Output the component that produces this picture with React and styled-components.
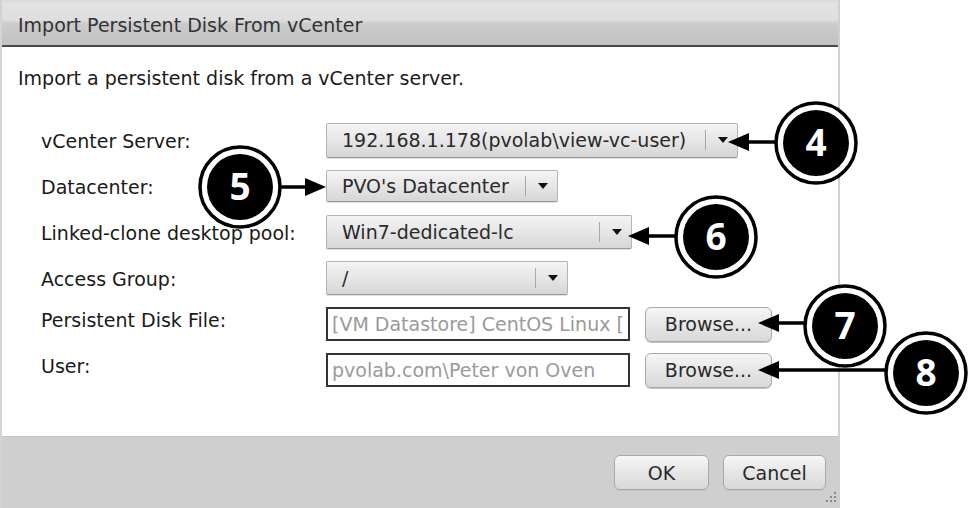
import React from "react"
import styled, { createGlobalStyle } from "styled-components"

const GlobalStyle = createGlobalStyle`
  html, body {
    margin: 0;
    padding: 0;
    background: #fff;
  }
  body {
    font-family: "DejaVu Sans", Verdana, sans-serif;
  }
`

const Page = styled.div`
  position: relative;
  width: 969px;
  height: 508px;
  overflow: hidden;
  background: #fff;
`

const Dialog = styled.section`
  width: 840px;
  height: 508px;
  box-sizing: border-box;
  border-left: 2px solid #d4d4d4;
  border-right: 2px solid #d0d0d0;
  display: flex;
  flex-direction: column;
`

const Header = styled.header`
  height: 47px;
  flex: none;
  box-sizing: border-box;
  border-bottom: 2px solid #4a4a4a;
  background: linear-gradient(
    to bottom,
    #d9d9d9 0px,
    #e3e3e3 4px,
    #dedede 20px,
    #cbcbcb 24px,
    #c2c2c2 45px
  );
  display: flex;
  align-items: center;
  padding-left: 16px;
  padding-top: 5px;
  font-size: 19px;
  color: #333;
`

const Body = styled.div`
  flex: 1;
  background: #fff;
  padding: 19px 0 0 16px;
`

const Intro = styled.p`
  margin: 0 0 33px;
  font-size: 19px;
  line-height: 24px;
  color: #1a1a1a;
`

const Form = styled.div`
  margin-left: 23px;
  display: grid;
  grid-template-columns: 285px 1fr;
  grid-auto-rows: 34px;
  row-gap: 12px;
`

const Label = styled.label`
  font-size: 19px;
  color: #1a1a1a;
  white-space: nowrap;
  align-self: ${p => (p.$top ? "start" : "center")};
  margin-top: ${p => (p.$top ? "2px" : "2px")};
`

const Field = styled.div`
  display: flex;
  align-items: center;
  gap: 15px;
`

const Select = styled.div`
  width: ${p => p.$width}px;
  height: ${p => p.$height || 34}px;
  box-sizing: border-box;
  border: 1px solid #b4b4b4;
  border-bottom-color: #9a9a9a;
  border-radius: 2px;
  background: linear-gradient(to bottom, #f4f4f4, #e6e6e6 50%, #d6d6d6);
  display: flex;
  align-items: center;
  box-shadow: 0 1px 0 #e0e0e0;
`

const SelectValue = styled.span`
  flex: 1;
  padding-left: 15px;
  font-size: 19px;
  color: #2a2a2a;
  white-space: nowrap;
  overflow: hidden;
`

const SelectToggle = styled.span`
  width: 31px;
  flex: none;
  height: 20px;
  border-left: 1px solid #a8a8a8;
  display: flex;
  align-items: center;
  justify-content: center;
  &::after {
    content: "";
    border-left: 5px solid transparent;
    border-right: 5px solid transparent;
    border-top: 6px solid #111;
    margin-left: 2px;
  }
`

const TextBox = styled.div`
  width: 304px;
  height: 34px;
  flex: none;
  box-sizing: border-box;
  border: 2px solid #333;
  background: #fff;
  display: flex;
  align-items: center;
  padding-left: 4px;
  font-size: 19px;
  color: #9a9a9a;
  white-space: nowrap;
  overflow: hidden;
`

const Button = styled.button`
  width: ${p => p.$width}px;
  height: 35px;
  flex: none;
  box-sizing: border-box;
  border: 1px solid #a9a9a9;
  border-radius: 6px;
  background: linear-gradient(to bottom, #f6f6f6, #e6e6e6 50%, #d9d9d9);
  font-family: "DejaVu Sans", Verdana, sans-serif;
  font-size: 19px;
  color: #2a2a2a;
  padding: 0;
  box-shadow: 0 1px 0 #c4c4c4;
`

const Footer = styled.footer`
  height: 72px;
  flex: none;
  box-sizing: border-box;
  border-top: 1px solid #c6c6c6;
  background: #cfcfcf;
  display: flex;
  justify-content: flex-end;
  align-items: flex-start;
  gap: 14px;
  padding: 18px 12px 0 0;
  position: relative;
`

const Grip = styled.svg`
  position: absolute;
  right: 0;
  bottom: 2px;
`

const Callouts = styled.svg`
  position: absolute;
  left: 0;
  top: 0;
  pointer-events: none;
`

const selects = [
  { label: "vCenter Server:", value: "192.168.1.178(pvolab\\view-vc-user)", width: 412, height: 35 },
  { label: "Datacenter:", value: "PVO's Datacenter", width: 232, height: 32 },
  { label: "Linked-clone desktop pool:", value: "Win7-dedicated-lc", width: 306 },
  { label: "Access Group:", value: "/", width: 242 },
]

const files = [
  { label: "Persistent Disk File:", value: "[VM Datastore] CentOS Linux [" },
  { label: "User:", value: "pvolab.com\\Peter von Oven" },
]

// annotation bubbles: circle centre, arrow tip
const marks = [
  { n: 4, cx: 816, cy: 143, tipX: 728, y: 142, dir: -1 },
  { n: 5, cx: 240, cy: 187, tipX: 326, y: 187, dir: 1 },
  { n: 6, cx: 716, cy: 237, tipX: 628, y: 236, dir: -1 },
  { n: 7, cx: 845, cy: 326, tipX: 758, y: 323, dir: -1 },
  { n: 8, cx: 926, cy: 373, tipX: 758, y: 370, dir: -1 },
]

const Mark = ({ n, cx, cy, tipX, y, dir }) => {
  const start = cx + dir * 41
  const base = tipX - dir * 21
  return (
    <g>
      <line x1={start} y1={y} x2={base} y2={y} stroke="#000" strokeWidth="3.5" />
      <polygon points={`${tipX},${y} ${base},${y - 9} ${base},${y + 9}`} fill="#000" />
      <circle cx={cx} cy={cy} r="40" fill="#fff" stroke="#000" strokeWidth="3.5" />
      <circle cx={cx} cy={cy} r="33" fill="#000" />
      <text
        x={cx}
        y={cy + 13}
        textAnchor="middle"
        fill="#fff"
        fontFamily="'Open Sans', sans-serif"
        fontWeight="700"
        fontSize="37"
      >
        {n}
      </text>
    </g>
  )
}

const App = () => {
  return (
    <Page>
      <GlobalStyle />
      <Dialog>
        <Header>Import Persistent Disk From vCenter</Header>
        <Body>
          <Intro>Import a persistent disk from a vCenter server.</Intro>
          <Form>
            {selects.map(s => (
              <React.Fragment key={s.label}>
                <Label>{s.label}</Label>
                <Field>
                  <Select $width={s.width} $height={s.height}>
                    <SelectValue>{s.value}</SelectValue>
                    <SelectToggle />
                  </Select>
                </Field>
              </React.Fragment>
            ))}
            {files.map(f => (
              <React.Fragment key={f.label}>
                <Label $top>{f.label}</Label>
                <Field>
                  <TextBox>{f.value}</TextBox>
                  <Button $width={127}>Browse...</Button>
                </Field>
              </React.Fragment>
            ))}
          </Form>
        </Body>
        <Footer>
          <Button $width={95}>OK</Button>
          <Button $width={103}>Cancel</Button>
          <Grip width="16" height="16" viewBox="0 0 16 16">
            <rect x="12" y="2" width="2" height="2" fill="#8a8a8a" />
            <rect x="8" y="6" width="2" height="2" fill="#8a8a8a" />
            <rect x="12" y="6" width="2" height="2" fill="#8a8a8a" />
            <rect x="4" y="10" width="2" height="2" fill="#8a8a8a" />
            <rect x="8" y="10" width="2" height="2" fill="#8a8a8a" />
            <rect x="12" y="10" width="2" height="2" fill="#8a8a8a" />
          </Grip>
        </Footer>
      </Dialog>
      <Callouts width="969" height="508" viewBox="0 0 969 508">
        {marks.map(m => (
          <Mark key={m.n} {...m} />
        ))}
      </Callouts>
    </Page>
  )
}

export default App
